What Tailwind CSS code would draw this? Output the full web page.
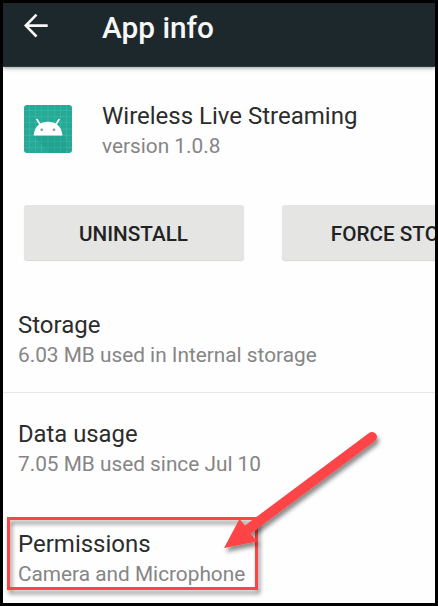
<!DOCTYPE html>
<html lang="en">
<head>
<meta charset="utf-8">
<title>App info</title>
<script src="https://cdn.jsdelivr.net/npm/@tailwindcss/browser@4"></script>
</head>
<body class="bg-black">
<div class="relative w-[438px] h-[606px] overflow-hidden border-[3px] border-black bg-[#fefefe] font-[Roboto,sans-serif] text-[#2c2c2c]">
  <header class="flex h-16 items-start bg-[#1d282d] text-[#f7f7f7] shadow-[0_1px_4px_rgba(40,60,65,0.5)] border-b border-[#30393d]">
    <svg class="ml-[20px] mt-[10px] w-[26px] h-[26px] shrink-0" viewBox="0 0 26 26" fill="none" stroke="currentColor" stroke-width="2.6"><path d="M24.7 12.6H3M13.5 1.7L2.8 12.6L13.5 23.5"/></svg>
    <h1 class="ml-[53px] text-[29.8px] leading-[49px] font-medium whitespace-nowrap">App info</h1>
  </header>
  <section class="flex mt-[34px] pl-[21px] h-[60px]">
    <svg class="mt-1 w-12 h-12 shrink-0" viewBox="0 0 48 48">
      <rect width="48" height="48" rx="3" fill="#26aa97"/>
      <path d="M5.5 0V48M11.5 0V48M17.5 0V48M24 0V48M30.5 0V48M36.5 0V48M42.5 0V48M0 5.5H48M0 11.5H48M0 17.5H48M0 24H48M0 30.5H48M0 36.5H48M0 42.5H48" stroke="#5bc5b4" stroke-opacity=".4" stroke-width=".8"/>
      <path d="M10 31H38.500L43 36V45L40 48H25Z" fill="#15917f" opacity=".25"/>
      <path d="M13 14.500L16 19.500M35 14.500L32 19.500" stroke="#fff" stroke-width="1.600" stroke-linecap="round"/>
      <path d="M9.700 30.500C10.200 22 15.500 16.800 24 16.800S37.900 22 38.400 30.500Z" fill="#fff"/>
      <circle cx="17.700" cy="24.700" r="1.300" fill="#789d98"/><circle cx="30" cy="24.700" r="1.300" fill="#789d98"/>
    </svg>
    <div class="ml-[30px] whitespace-nowrap">
      <h2 class="text-[24px] leading-[30px]">Wireless Live Streaming</h2>
      <p class="text-[20.8px] leading-[31px] text-[#858585]">version 1.0.8</p>
    </div>
  </section>
  <div class="flex mt-[44px] ml-[20.5px] gap-[38px] text-[20.7px] font-medium text-[#222]">
    <button class="w-[220px] h-[55px] pt-[4px] shrink-0 rounded-[3px] bg-[#e5e5e4] shadow-[0_1px_1px_#d5d5d5]">UNINSTALL</button>
    <button class="w-[220px] h-[55px] pt-[4px] shrink-0 rounded-[3px] bg-[#e5e5e4] shadow-[0_1px_1px_#d5d5d5] whitespace-nowrap">FORCE STOP</button>
  </div>
  <section class="mt-[23px] h-[110px] border-b border-[#e8e8e8] pl-[15px] pt-[27px] whitespace-nowrap">
    <h2 class="text-[24px] leading-[30px]">Storage</h2>
    <p class="text-[20.8px] leading-[30px] text-[#858585]">6.03 MB used in Internal storage</p>
  </section>
  <section class="h-[110px] pl-[15px] pt-[26px] whitespace-nowrap">
    <h2 class="text-[23.8px] leading-[30px]">Data usage</h2>
    <p class="text-[20.8px] leading-[30px] text-[#858585]">7.05 MB used since Jul 10</p>
  </section>
  <section class="h-[100px] pl-[15px] pt-[26px] whitespace-nowrap">
    <h2 class="text-[24px] leading-[30px]">Permissions</h2>
    <p class="text-[20.8px] leading-[30px] text-[#858585]">Camera and Microphone</p>
  </section>
  <svg class="absolute left-[-3px] top-[-3px] w-[438px] h-[606px]" viewBox="0 0 438 606">
    <defs><filter id="s" x="-10%" y="-20%" width="125%" height="150%"><feDropShadow dx="2" dy="4" stdDeviation="2" flood-color="#000" flood-opacity=".45"/></filter></defs>
    <rect x="8.500" y="518.500" width="248" height="70" fill="none" stroke="#fd4447" stroke-width="3" filter="url(#s)"/>
    <g filter="url(#s)" fill="#fd4447">
      <path d="M372 437L248 529.500" stroke="#fd4447" stroke-width="10" stroke-linecap="round"/>
      <path d="M224 548L239.500 519L245.500 526L251.500 534.500L257 541.500Z"/>
    </g>
  </svg>
</div>
</body>
</html>
